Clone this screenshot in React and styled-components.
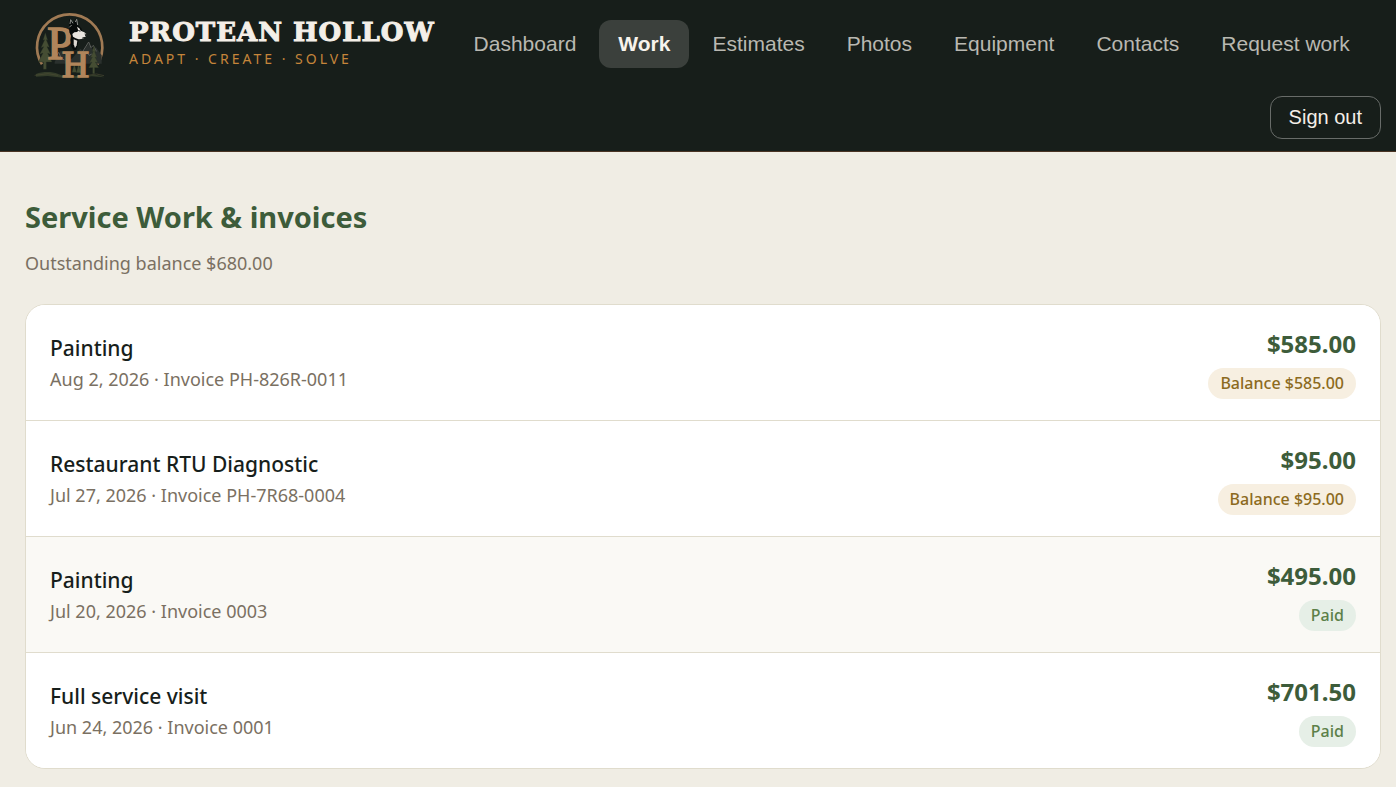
import React from "react";
import styled, { createGlobalStyle } from "styled-components";

const GlobalStyle = createGlobalStyle`
  *, *::before, *::after { box-sizing: border-box; }
  body {
    margin: 0;
    background: #f0ede4;
    color: #171e1b;
    font-family: "Segoe UI", "Noto Sans", sans-serif;
  }
`;

const Header = styled.header`
  display: flex;
  flex-wrap: wrap;
  align-items: center;
  column-gap: 20px;
  row-gap: 16px;
  padding: 8px 15px 12px 25px;
  background: #171e1a;
  border-bottom: 1px solid #4a3424;
`;

const Brand = styled.a`
  display: flex;
  align-items: center;
  gap: 16px;
  color: #f4efe8;
  text-decoration: none;
`;

const Logo = styled.svg`
  width: 88px;
  height: 72px;
  flex: none;
  overflow: visible;
`;

const BrandText = styled.span`
  display: flex;
  flex-direction: column;
`;

const BrandName = styled.span`
  font: 700 26px/30px "DejaVu Serif", serif;
  -webkit-text-stroke: 1px currentColor;
  letter-spacing: 1px;
  white-space: nowrap;
`;

const Tagline = styled.span`
  color: #c5853a;
  font-size: 14px;
  line-height: 24px;
  letter-spacing: 3px;
  white-space: nowrap;
`;

const Nav = styled.nav`
  display: flex;
  gap: 4px;
`;

const NavLink = styled.a`
  padding: 0 19px;
  border-radius: 12px;
  font: ${(p) => (p.$active ? 700 : 400)} 21px/48px "Liberation Sans", Arial, sans-serif;
  color: ${(p) => (p.$active ? "#f7f3ec" : "#b9b8b1")};
  background: ${(p) => (p.$active ? "#3b403c" : "transparent")};
  text-decoration: none;
  white-space: nowrap;
`;

const SignOut = styled.button`
  margin-left: auto;
  padding: 0 18px;
  border: 1px solid #686c69;
  border-radius: 12px;
  background: transparent;
  color: #f4efe8;
  font: 400 20px/41px "Liberation Sans", Arial, sans-serif;
`;

const Main = styled.main`
  padding: 44px 15px 19px 25px;
`;

const Title = styled.h1`
  margin: 0;
  color: #3d5c3a;
  font-size: 29px;
  line-height: 42px;
`;

const Summary = styled.p`
  margin: 10px 0 26px;
  color: #7a7062;
  font-size: 18px;
  line-height: 30px;
`;

const Card = styled.ul`
  margin: 0;
  padding: 0;
  list-style: none;
  overflow: hidden;
  background: #fff;
  border: 1px solid #e0dccd;
  border-radius: 20px;
`;

const Item = styled.li`
  & + & { border-top: 1px solid #e0dccd; }
`;

const Row = styled.a`
  display: flex;
  align-items: center;
  justify-content: space-between;
  gap: 24px;
  padding: 22px 24px 21px;
  background: ${(p) => (p.$hovered ? "#faf9f5" : "#fff")};
  color: inherit;
  text-decoration: none;
`;

const Details = styled.div`
  display: flex;
  flex-direction: column;
`;

const JobName = styled.span`
  font-size: 21px;
  font-weight: 500;
  line-height: 32px;
`;

const Meta = styled.span`
  color: #7a7062;
  font-size: 18px;
  line-height: 30px;
`;

const Totals = styled.div`
  display: flex;
  flex-direction: column;
  align-items: flex-end;
  gap: 7px;
`;

const Amount = styled.span`
  color: #3d5c3a;
  font-size: 24px;
  font-weight: 700;
  line-height: 34px;
`;

const Badge = styled.span`
  padding: 0 12px;
  border-radius: 16px;
  font-size: 16px;
  font-weight: 500;
  line-height: 31px;
  color: ${(p) => (p.$paid ? "#5c8049" : "#8c6a20")};
  background: ${(p) => (p.$paid ? "#e6efe7" : "#f7efe1")};
`;

const links = ["Dashboard", "Work", "Estimates", "Photos", "Equipment", "Contacts", "Request work"];

const invoices = [
  { job: "Painting", meta: "Aug 2, 2026 · Invoice PH-826R-0011", total: "$585.00", status: "Balance $585.00" },
  { job: "Restaurant RTU Diagnostic", meta: "Jul 27, 2026 · Invoice PH-7R68-0004", total: "$95.00", status: "Balance $95.00" },
  { job: "Painting", meta: "Jul 20, 2026 · Invoice 0003", total: "$495.00", status: "Paid", paid: true, hovered: true },
  { job: "Full service visit", meta: "Jun 24, 2026 · Invoice 0001", total: "$701.50", status: "Paid", paid: true },
];

function BrandLogo() {
  return (
    <Logo viewBox="15 24 264 216" aria-hidden="true">
      <path d="M66 193A98 98 0 1 1 232 193" fill="none" stroke="#a07a54" strokeWidth="8" />
      <path d="M104 186l10-20 9-15 13 17 19 9 26-31 9 8 15-22 12 15 11-5 17 24v25H104z" fill="#2a302d" />
      <path d="M108 170l8-13 8 18 9 5M186 158l20-32 7 17 7-7 9 18M188 165l12-9 7 10 9-4" fill="none" stroke="#5c5f5b" strokeWidth="3" />
      <g fill="#454d33" stroke="#252e20" strokeWidth="1">
        <path d="M76 98l-7 23 5-2-11 24 8-3-12 23 10-4-14 27h15v22h9v-22h17l-13-26 9 3-11-23 7 2-9-23 4 2z" />
        <path d="M222 137l-6 19 4-2-9 19 6-2-9 18 8-3-10 17h12v18h6v-18h12l-10-17 8 2-9-17 6 2-7-18 3 2z" />
        <path d="M163 193l-7 24h14zM176 190l-7 28h14z" />
      </g>
      <path d="M48 222c20-8 50-7 65-1s22 10 34 7c15-4 31 3 51 1 19-4 32-7 55 3l-38-3-38 6-50-2-44-5-35 2z" fill="#343d2a" />
      <path d="M44 226l40-5 30 5M202 226l28-4 22 5" fill="none" stroke="#4b4c34" strokeWidth="2" />
      <g fill="#b0855b" stroke="#b0855b" strokeWidth="5" fontFamily="Liberation Serif, serif">
        <text x="82" y="178" fontSize="138">P</text>
        <text x="126" y="230" fontSize="112">H</text>
      </g>
      <path d="M148 57l11 13 9-14 5 19 11 10 5 13-12 16-4 21-4 14-8 2-8-12-2-18 2-14-5-10-1-22z" fill="#070b0a" />
      <path d="M150 72l2-13 7 11M166 66l4-8 3 17M148 82l7-7" fill="none" stroke="#8a8d89" strokeWidth="3" />
      <path d="M171 80l7 5 4 7 11 5 6 5-1 6-5 6-9 3-8 1-9-3-8-5-2-8 6-5 8-1 4-4z" fill="#e9e5df" />
      <path d="M161 118l11 4-2 14-5 8-4-11z" fill="#ddd8d1" />
      <path d="M175 91l6 3M194 102l6 2-5 4M187 114l8-2" fill="none" stroke="#151a18" strokeWidth="3" />
    </Logo>
  );
}

export default function App() {
  return (
    <>
      <GlobalStyle />
      <Header>
        <Brand href="#">
          <BrandLogo />
          <BrandText>
            <BrandName>PROTEAN HOLLOW</BrandName>
            <Tagline>ADAPT · CREATE · SOLVE</Tagline>
          </BrandText>
        </Brand>
        <Nav>
          {links.map((label) => (
            <NavLink key={label} href="#" $active={label === "Work"}>{label}</NavLink>
          ))}
        </Nav>
        <SignOut type="button">Sign out</SignOut>
      </Header>
      <Main>
        <Title>Service Work &amp; invoices</Title>
        <Summary>Outstanding balance $680.00</Summary>
        <Card>
          {invoices.map((inv) => (
            <Item key={inv.meta}>
              <Row href="#" $hovered={inv.hovered}>
                <Details>
                  <JobName>{inv.job}</JobName>
                  <Meta>{inv.meta}</Meta>
                </Details>
                <Totals>
                  <Amount>{inv.total}</Amount>
                  <Badge $paid={inv.paid}>{inv.status}</Badge>
                </Totals>
              </Row>
            </Item>
          ))}
        </Card>
      </Main>
    </>
  );
}
